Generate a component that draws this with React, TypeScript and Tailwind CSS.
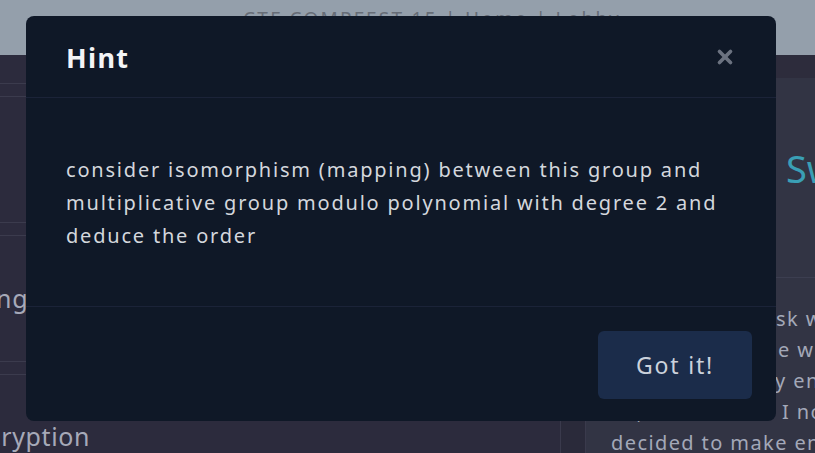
import React from 'react';
import { X } from 'lucide-react';

const font = { fontFamily: '"Noto Sans", "Open Sans", sans-serif' };

const HintModal = () => {
  return (
    <div className="absolute left-[26px] top-[16px] w-[750px] h-[405px] rounded-lg bg-[#0f1827] flex flex-col">
      {/* Header */}
      <div className="h-[82px] flex items-center justify-between pl-10 pr-10 border-b border-[#1b2338]">
        <h3 className="text-[27px] font-bold text-[#f3f4f6] tracking-wider pt-1">Hint</h3>
        <button className="text-[#6b7280]">
          <X size={22} strokeWidth={4} />
        </button>
      </div>

      {/* Body */}
      <div className="flex-1 px-10 pt-[55px] border-b border-[#1b2338]">
        <p className="text-[20px] leading-[33px] tracking-[0.09em] text-[#d4d7dd]">
          consider isomorphism (mapping) between this group and multiplicative group modulo polynomial with degree 2 and deduce the order
        </p>
      </div>

      {/* Footer */}
      <div className="h-[114px] flex items-start justify-end pt-[24px] pr-6">
        <button className="w-[154px] h-[68px] rounded-md bg-[#1b2c4a] text-[23px] tracking-[0.08em] text-[#cbd2dc]">
          Got it!
        </button>
      </div>
    </div>
  );
};

export default function App() {
  return (
    <div className="relative w-[815px] h-[453px] overflow-hidden bg-[#2c2b3d]" style={font}>
      {/* Top bar */}
      <div className="h-[55px] bg-[#949fab] pt-[5px] pl-[243px]">
        <span className="text-[19px] tracking-[0.12em] text-[#666c76] whitespace-nowrap">CTF COMPFEST 15 | Home | Lobby</span>
      </div>

      <div className="flex h-[398px]">
        {/* Left column */}
        <div className="w-[561px] shrink-0 border-r border-[#3a3a4c] flex flex-col gap-[12px] overflow-hidden">
          <div className="h-[29px] shrink-0 border-b border-[#3b3b4d]" />
          <div className="h-[127px] shrink-0 border-y border-[#3b3b4d]" />
          <div className="h-[127px] shrink-0 border-y border-[#3b3b4d] pt-[44px]">
            <span className="text-[25px] tracking-wide text-[#a6a9b8] whitespace-nowrap -ml-[128px] inline-block">Kid Breaking</span>
          </div>
          <div className="flex-1 border-t border-[#3b3b4d] pt-[43px]">
            <span className="text-[25px] tracking-wide text-[#a6a9b8] whitespace-nowrap -ml-[42px] inline-block">Encryption</span>
          </div>
        </div>

        {/* Gap */}
        <div className="w-[25px] shrink-0 bg-[#2a2a3a] border-r border-[#3a3a4c]" />

        {/* Right panel */}
        <div className="flex-1 min-w-0 flex flex-col overflow-hidden">
          <div className="h-[23px] shrink-0 bg-[#2d2c3c]" />
          <div className="flex-1 min-h-0 bg-[#323444]">
            <div className="h-[200px] border-b border-[#3c3e50] pt-[62px] pl-[200px]">
              <span className="text-[38px] text-[#3a9fb5] whitespace-nowrap">Swap</span>
            </div>
            <div className="pl-[25px] pt-[25px] text-[20px] leading-[31px] tracking-[0.07em] text-[#a3a8b8] whitespace-nowrap">
              <p><span className="inline-block w-[165px]">A simple ta</span>sk with</p>
              <p><span className="inline-block w-[167px]">at the sam</span>e with</p>
              <p><span className="inline-block w-[164px]">but with m</span>y enc</p>
              <p><span className="inline-block w-[171px]">So, now</span>I now</p>
              <p>decided to make enc</p>
            </div>
          </div>
        </div>
      </div>

      <HintModal />
    </div>
  );
}
